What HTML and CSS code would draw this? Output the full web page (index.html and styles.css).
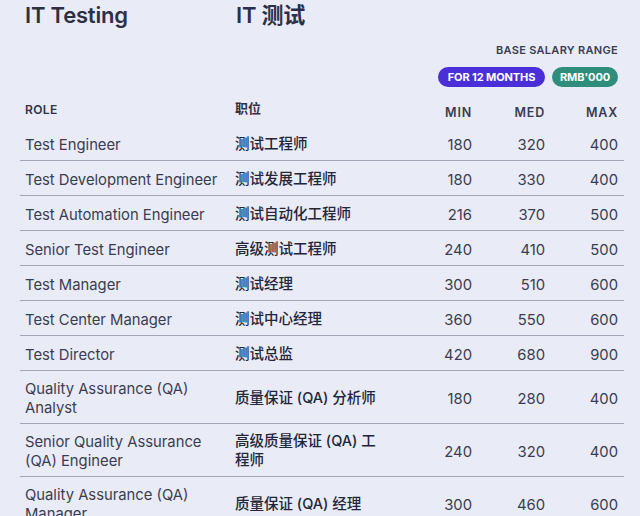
FILE: index.html
```html
<!DOCTYPE html>
<html lang="en">
<head>
<meta charset="utf-8">
<title>IT Testing</title>
<link rel="stylesheet" href="styles.css">
</head>
<body>
<div class="page">
  <div class="grid title-row">
    <h1 class="title">IT Testing</h1>
    <h1 class="title zh-title">IT 测试</h1>
  </div>
  <div class="range">
    <div class="range-label">BASE SALARY RANGE</div>
    <div class="pills">
      <span class="pill pill-blue">FOR 12 MONTHS</span>
      <span class="pill pill-green">RMB'000</span>
    </div>
  </div>
  <div class="grid head">
    <div class="h-role">ROLE</div>
    <div class="h-zh">职位</div>
    <div class="h-num">MIN</div>
    <div class="h-num">MED</div>
    <div class="h-num">MAX</div>
  </div>
  <div class="grid row"><div class="role">Test Engineer</div><div class="zh">测试工程师</div><div class="num">180</div><div class="num">320</div><div class="num">400</div></div>
  <div class="grid row"><div class="role">Test Development Engineer</div><div class="zh">测试发展工程师</div><div class="num">180</div><div class="num">330</div><div class="num">400</div></div>
  <div class="grid row"><div class="role">Test Automation Engineer</div><div class="zh">测试自动化工程师</div><div class="num">216</div><div class="num">370</div><div class="num">500</div></div>
  <div class="grid row"><div class="role">Senior Test Engineer</div><div class="zh">高级测试工程师</div><div class="num">240</div><div class="num">410</div><div class="num">500</div></div>
  <div class="grid row"><div class="role">Test Manager</div><div class="zh">测试经理</div><div class="num">300</div><div class="num">510</div><div class="num">600</div></div>
  <div class="grid row"><div class="role">Test Center Manager</div><div class="zh">测试中心经理</div><div class="num">360</div><div class="num">550</div><div class="num">600</div></div>
  <div class="grid row"><div class="role">Test Director</div><div class="zh">测试总监</div><div class="num">420</div><div class="num">680</div><div class="num">900</div></div>
  <div class="grid row"><div class="role">Quality Assurance (QA) Analyst</div><div class="zh">质量保证 (QA) 分析师</div><div class="num">180</div><div class="num">280</div><div class="num">400</div></div>
  <div class="grid row"><div class="role">Senior Quality Assurance (QA) Engineer</div><div class="zh">高级质量保证 (QA) 工程师</div><div class="num">240</div><div class="num">320</div><div class="num">400</div></div>
  <div class="grid row"><div class="role">Quality Assurance (QA) Manager</div><div class="zh">质量保证 (QA) 经理</div><div class="num">300</div><div class="num">460</div><div class="num">600</div></div>
</div>
</body>
</html>
```
FILE: styles.css
```css
html, body {
  margin: 0;
  padding: 0;
}
body {
  background: #e9ebf6;
  font-family: Inter, "Noto Sans CJK SC", sans-serif;
  color: #3a3d50;
  width: 640px;
  height: 516px;
  overflow: hidden;
}
.page {
  margin: 0 16px 0 20px;
}
.grid {
  display: grid;
  grid-template-columns: 210px 164px 73px 73px 73px;
  padding: 0 6px 0 5px;
}
.title-row {
  height: 32px;
  align-items: start;
}
.title {
  margin: 0;
  font-size: 22px;
  line-height: 30px;
  font-weight: 600;
  color: #2c3047;
  letter-spacing: -0.2px;
}
.zh-title {
  grid-column: 2 / span 4;
  padding-left: 1px;
}
.range {
  display: flex;
  flex-direction: column;
  align-items: flex-end;
  padding-right: 6px;
  padding-top: 11px;
}
.range-label {
  font-size: 11px;
  line-height: 14px;
  font-weight: 600;
  letter-spacing: 0.3px;
  color: #3b3e52;
}
.pills {
  display: flex;
  gap: 7px;
  margin-top: 10px;
}
.pill {
  display: inline-flex;
  align-items: center;
  justify-content: center;
  height: 20px;
  border-radius: 10px;
  color: #ffffff;
  font-size: 11px;
  font-weight: 700;
  letter-spacing: -0.1px;
}
.pill-blue {
  background: #4a2fd8;
  width: 107px;
}
.pill-green {
  background: #2e8e7b;
  width: 66px;
}
.head {
  height: 39px;
  align-items: center;
}
.h-role {
  font-size: 12px;
  font-weight: 600;
  letter-spacing: 0.4px;
  color: #2f3245;
  margin-top: 6px;
}
.h-zh {
  font-size: 13px;
  font-weight: 700;
  color: #2f3245;
  margin-top: 1px;
}
.h-num {
  text-align: right;
  font-size: 12.5px;
  font-weight: 600;
  letter-spacing: 0.8px;
  color: #3a3d50;
  margin-top: 11px;
}
.row {
  align-items: center;
  grid-auto-rows: minmax(20px, auto);
  padding-top: 9px;
  padding-bottom: 5px;
  border-bottom: 1px solid #a2a6b6;
  font-size: 14.8px;
  line-height: 19px;
}
.role {
  color: #3a3d50;
  padding-right: 6px;
}
.zh {
  font-size: 14.5px;
  font-weight: 500;
  color: #23263a;
  padding-right: 18px;
  margin-top: -4px;
}
.num {
  text-align: right;
  color: #3a3d50;
}
```
